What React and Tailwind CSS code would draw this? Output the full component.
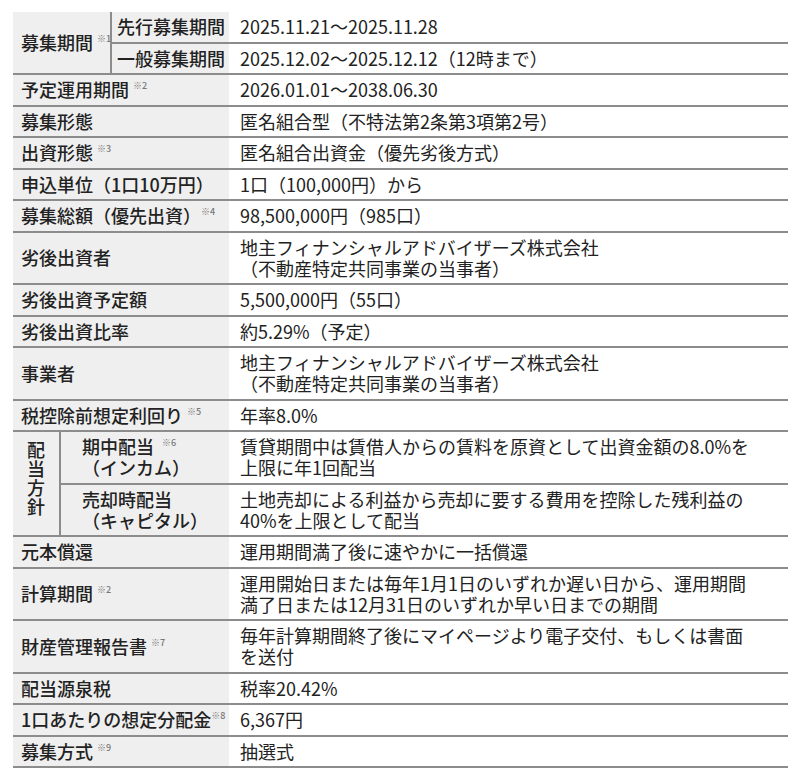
import React from "react";

const head = "flex items-center bg-[#efefef] border-b-2 border-[#8c8c8c] py-[4.25px] leading-[21px] font-medium";
const val = "flex items-center bg-white border-b-2 border-[#8c8c8c] py-[4.25px] pl-[11px] leading-[21px] whitespace-nowrap";

function Note({ n, gap = "ml-1" }) {
  return <span className={`${gap} align-top text-[9px] leading-[14px] text-[#777]`}>※{n}</span>;
}

const rows = [
  { label: "予定運用期間", note: 2, value: ["2026.01.01～2038.06.30"] },
  { label: "募集形態", value: ["匿名組合型（不特法第2条第3項第2号）"] },
  { label: "出資形態", note: 3, value: ["匿名組合出資金（優先劣後方式）"] },
  { label: "申込単位（1口10万円）", value: ["1口（100,000円）から"] },
  { label: "募集総額（優先出資）", note: 4, tight: true, value: ["98,500,000円（985口）"] },
  { label: "劣後出資者", value: ["地主フィナンシャルアドバイザーズ株式会社", "（不動産特定共同事業の当事者）"] },
  { label: "劣後出資予定額", value: ["5,500,000円（55口）"] },
  { label: "劣後出資比率", value: ["約5.29%（予定）"] },
  { label: "事業者", value: ["地主フィナンシャルアドバイザーズ株式会社", "（不動産特定共同事業の当事者）"] },
  { label: "税控除前想定利回り", note: 5, value: ["年率8.0%"] },
];

const rows2 = [
  { label: "元本償還", value: ["運用期間満了後に速やかに一括償還"] },
  {
    label: "計算期間",
    note: 2,
    value: ["運用開始日または毎年1月1日のいずれか遅い日から、運用期間", "満了日または12月31日のいずれか早い日までの期間"],
  },
  {
    label: "財産管理報告書",
    note: 7,
    value: ["毎年計算期間終了後にマイページより電子交付、もしくは書面", "を送付"],
  },
  { label: "配当源泉税", value: ["税率20.42%"] },
  { label: "1口あたりの想定分配金", note: 8, tight: true, value: ["6,367円"] },
  { label: "募集方式", note: 9, value: ["抽選式"] },
];

function Value({ lines }) {
  return (
    <div className={val}>
      <div>
        {lines.map((l, i) => (
          <div key={i}>{l}</div>
        ))}
      </div>
    </div>
  );
}

function Row({ r }) {
  return (
    <>
      <div className={`${head} col-span-3 pl-2`}>
        <span className="whitespace-nowrap">
          {r.label}
          {r.note && <Note n={r.note} gap={r.tight ? "ml-0" : "ml-1"} />}
        </span>
      </div>
      <Value lines={r.value} />
    </>
  );
}

export default function App() {
  return (
    <div className="bg-white min-h-[772px] pt-[12px] pl-[13px] font-['Noto_Sans_CJK_JP','Noto_Sans',sans-serif] text-[18px] text-[#222]">
      <div className="grid w-[775px] grid-cols-[48px_51px_117px_1fr]">
        {/* 募集期間 */}
        <div className={`${head} col-span-2 row-span-2 pl-2 border-r-2`}>
          <span className="whitespace-nowrap">
            募集期間
            <Note n={1} />
          </span>
        </div>
        <div className={`${head} pl-[5px] whitespace-nowrap`}>先行募集期間</div>
        <Value lines={["2025.11.21～2025.11.28"]} />
        <div className={`${head} pl-[5px] whitespace-nowrap`}>一般募集期間</div>
        <Value lines={["2025.12.02～2025.12.12（12時まで）"]} />

        {rows.map((r) => (
          <Row key={r.label} r={r} />
        ))}

        {/* 配当方針 */}
        <div className={`${head} row-span-2 justify-center border-r-2 pb-4`}>
          <div className="flex flex-col items-center leading-[19px]">
            <span>配</span>
            <span>当</span>
            <span>方</span>
            <span>針</span>
          </div>
        </div>
        <div className={`${head} col-span-2 pl-[21px]`}>
          <div className="whitespace-nowrap">
            <div>
              期中配当
              <Note n={6} gap="ml-2" />
            </div>
            <div>（インカム）</div>
          </div>
        </div>
        <Value
          lines={["賃貸期間中は賃借人からの賃料を原資として出資金額の8.0%を", "上限に年1回配当"]}
        />
        <div className={`${head} col-span-2 pl-[21px]`}>
          <div className="whitespace-nowrap">
            <div>売却時配当</div>
            <div>（キャピタル）</div>
          </div>
        </div>
        <Value
          lines={["土地売却による利益から売却に要する費用を控除した残利益の", "40%を上限として配当"]}
        />

        {rows2.map((r) => (
          <Row key={r.label} r={r} />
        ))}
      </div>
    </div>
  );
}
